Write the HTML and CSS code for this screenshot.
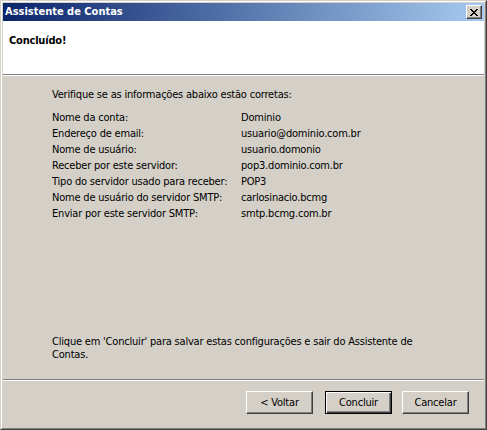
FILE: index.html
```html
<!DOCTYPE html>
<html lang="pt-BR">
<head>
<meta charset="utf-8">
<title>Assistente de Contas</title>
<link rel="stylesheet" href="styles.css">
</head>
<body>
<div class="window">
  <div class="frame">
    <div class="titlebar">
      <span class="title">Assistente de Contas</span>
      <button class="close" aria-label="Fechar">
        <svg width="8" height="7" viewBox="0 0 8 7"><path d="M0 0h2v1h1v1h2V1h1V0h2v1H7v1H6v1H5v1h1v1h1v1h1v1H6V6H5V5H3v1H2v1H0V6h1V5h1V4h1V3H2V2H1V1H0z" fill="#000"/></svg>
      </button>
    </div>
    <div class="client">
      <div class="header">
        <h1 class="heading">Concluído!</h1>
      </div>
      <div class="sep"></div>
      <div class="body">
        <p class="intro">Verifique se as informações abaixo estão corretas:</p>
        <div class="summary">
          <span class="label">Nome da conta:</span><span class="value">Dominio</span>
          <span class="label">Endereço de email:</span><span class="value">usuario@dominio.com.br</span>
          <span class="label">Nome de usuário:</span><span class="value">usuario.domonio</span>
          <span class="label">Receber por este servidor:</span><span class="value">pop3.dominio.com.br</span>
          <span class="label">Tipo do servidor usado para receber:</span><span class="value">POP3</span>
          <span class="label">Nome de usuário do servidor SMTP:</span><span class="value">carlosinacio.bcmg</span>
          <span class="label">Enviar por este servidor SMTP:</span><span class="value">smtp.bcmg.com.br</span>
        </div>
        <p class="note">Clique em 'Concluir' para salvar estas configurações e sair do Assistente de<br>Contas.</p>
      </div>
      <div class="sep"></div>
      <div class="buttons">
        <button class="btn btn-back">&lt; Voltar</button>
        <button class="btn btn-default">Concluir</button>
        <button class="btn">Cancelar</button>
      </div>
    </div>
  </div>
</div>
</body>
</html>
```
FILE: styles.css
```css
* { box-sizing: border-box; }
html, body { margin: 0; padding: 0; background: #d4d0c8; }
body {
  font-family: "DejaVu Sans Condensed", "DejaVu Sans", sans-serif;
  font-size: 11px;
  letter-spacing: -0.2px;
  color: #000;
}
.window {
  width: 487px;
  height: 430px;
  border: 1px solid;
  border-color: #d4d0c8 #404040 #404040 #d4d0c8;
}
.frame {
  height: 100%;
  border: 1px solid;
  border-color: #ffffff #808080 #808080 #ffffff;
  padding: 1px;
  background: #d4d0c8;
  display: flex;
  flex-direction: column;
}
.titlebar {
  height: 18px;
  flex: none;
  display: flex;
  align-items: center;
  justify-content: space-between;
  padding: 0 2px 0 2px;
  background: linear-gradient(to right, #0a246a, #a6caf0);
}
.title {
  color: #fff;
  font-weight: bold;
  letter-spacing: 0;
  line-height: 18px;
}
.close {
  width: 16px;
  height: 14px;
  padding: 0;
  margin: 0;
  display: flex;
  align-items: center;
  justify-content: center;
  background: #d4d0c8;
  border: 1px solid;
  border-color: #ffffff #404040 #404040 #ffffff;
  box-shadow: inset -1px -1px #808080;
}
.close svg { display: block; }
.client {
  flex: 1;
  display: flex;
  flex-direction: column;
}
.header {
  height: 53px;
  flex: none;
  background: #fff;
  padding: 13px 0 0 6px;
}
.heading {
  margin: 0;
  font-size: 11px;
  font-weight: bold;
  line-height: 13px;
}
.sep {
  height: 2px;
  flex: none;
  border-top: 1px solid #808080;
  border-bottom: 1px solid #ffffff;
}
.body {
  flex: 1;
  display: flex;
  flex-direction: column;
  padding: 11px 0 18px 49px;
}
.intro {
  margin: 0 0 7px;
  line-height: 16px;
}
.summary {
  display: grid;
  grid-template-columns: 189px auto;
  grid-auto-rows: 16px;
  line-height: 16px;
}
.note {
  margin: auto 0 0;
  line-height: 13px;
}
.buttons {
  height: 46px;
  flex: none;
  display: flex;
  justify-content: flex-end;
  align-items: flex-start;
  padding: 10px 15px 0 0;
}
.btn {
  width: 67px;
  height: 23px;
  margin: 0;
  padding: 0;
  font: inherit;
  letter-spacing: inherit;
  color: #000;
  background: #d4d0c8;
  border: 1px solid;
  border-color: #ffffff #404040 #404040 #ffffff;
  box-shadow: inset -1px -1px #808080;
}
.btn-back { margin-right: 12px; }
.btn-default {
  margin-right: 10px;
  border-color: #000;
  box-shadow: inset 1px 1px #ffffff, inset -1px -1px #404040, inset -2px -2px #808080;
}
```
